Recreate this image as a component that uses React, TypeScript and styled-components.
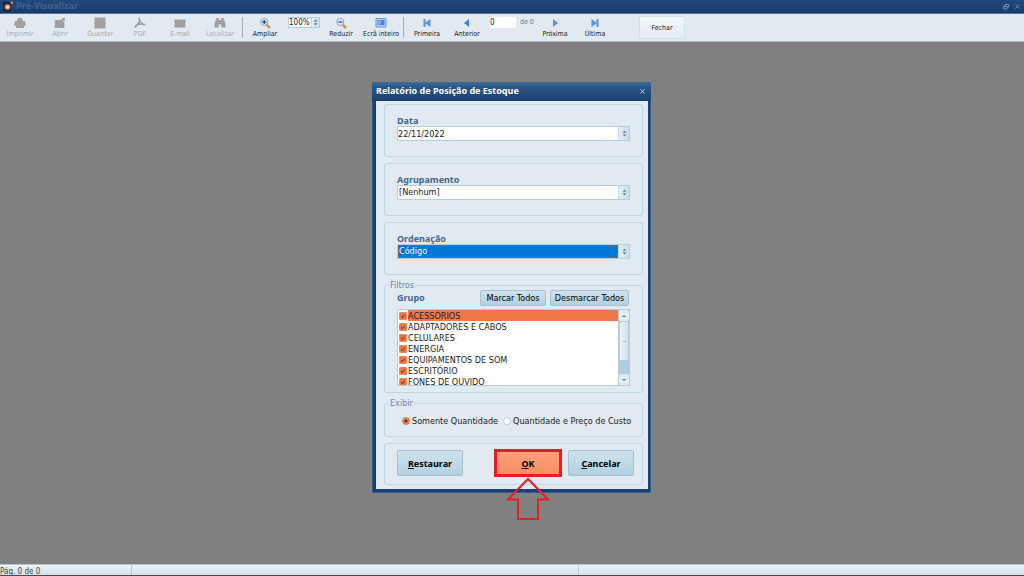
import React, { useState } from "react";
import styled, { createGlobalStyle, css } from "styled-components";

const GlobalStyle = createGlobalStyle`
  *, *::before, *::after { box-sizing: border-box; }
  body { margin: 0; background: #808080; }
  body, button, input, select { font-family: "DejaVu Sans Condensed", "DejaVu Sans", sans-serif; font-size: 9px; }
  button, input, select, fieldset, legend { margin: 0; padding: 0; border: 0; }
`;

const boldFont = css`
  font-family: "Noto Sans", "Open Sans", sans-serif;
  font-weight: bold;
`;

const Page = styled.div`
  min-height: 100vh;
  display: flex;
  flex-direction: column;
  background: #808080;
`;

const TitleBar = styled.header`
  height: 14px;
  display: flex;
  align-items: center;
  gap: 3px;
  padding: 0 3px;
  color: #3a648f;
  background: linear-gradient(#21497c, #193c6d);
  border-bottom: 1px solid #56708f;
`;

const AppTitle = styled.h1`
  flex: 1;
  margin: 0;
  font: bold 8px/12px "DejaVu Sans", sans-serif;
`;

const WindowButton = styled.button`
  width: 8px;
  height: 10px;
  display: grid;
  place-items: center;
  background: none;
  color: #7890ad;
`;

const ToolBar = styled.nav`
  height: 28px;
  display: flex;
  align-items: stretch;
  background: #e1e9f1;
  border-bottom: 1px solid #b4bac0;
`;

const Pager = styled.div`
  display: flex;
  padding-left: 1px;
`;

const Tool = styled.button`
  width: 40px;
  padding-top: 3px;
  display: flex;
  flex-direction: column;
  align-items: center;
  white-space: nowrap;
  font-size: 7px;
  line-height: 10px;
  background: none;
  color: #222;
  &:disabled { color: #a8adb2; }
  svg { display: block; flex: none; }
`;

const Separator = styled.span`
  width: 1px;
  margin: 3px 2px;
  background: #a4abb2;
`;

const ToolSlot = styled.div<{ $width: number }>`
  width: ${(p) => p.$width}px;
  padding: 3px 0 0 3px;
  display: flex;
  align-items: flex-start;
  gap: 4px;
  font-size: 7px;
  line-height: 11px;
  color: #5a7f9f;
  white-space: nowrap;
`;

const PageInput = styled.input`
  width: 26px;
  height: 11px;
  background: #fff;
  color: #222;
  font-size: 8px;
`;

const CloseReport = styled.button`
  width: 46px;
  height: 23px;
  margin: 2px 0 0 24px;
  font-size: 7px;
  color: #222;
  border: 1px solid #cfe0ea;
  border-radius: 2px;
  background: linear-gradient(#f3f7fa, #e3edf4);
`;

const Workspace = styled.main`
  flex: 1;
`;

const StatusBar = styled.footer`
  height: 12px;
  display: grid;
  grid-template-columns: 132px 447px 1fr;
  overflow: hidden;
  font-size: 8px;
  line-height: 13px;
  color: #444;
  background: linear-gradient(#edf3f7, #d3e1e9);
  border-top: 1px solid #b9c4ca;
  border-bottom: 1px solid #454a4d;
`;

const StatusCell = styled.span`
  border-right: 1px solid #b3c9d6;
  &:last-child { border-right: 0; }
`;

const Overlay = styled.div`
  position: absolute;
  inset: 0;
  display: flex;
  align-items: center;
  justify-content: center;
  padding: 0 1px 1px 0;
  pointer-events: none;
`;

const Dialog = styled.section`
  width: 279px;
  padding: 0 3px 4px 4px;
  pointer-events: auto;
  background: #1a3f70;
  border-radius: 3px 3px 0 0;
  box-shadow: inset 0 0 0 1px #315e8d;
`;

const DialogTitle = styled.header`
  height: 19px;
  margin: 0 -3px 0 -4px;
  padding: 0 5px 1px 4px;
  display: flex;
  align-items: center;
  justify-content: space-between;
  color: #fff;
  border-radius: 3px 3px 0 0;
  background: linear-gradient(#3d6d9d, #2a5587 30%, #1a3f70);
  h2 { margin: 0; ${boldFont} font-size: 9px; line-height: 12px; }
`;

const DialogBody = styled.form`
  display: grid;
  gap: 6px;
  padding: 3px 5px 4px 8px;
  background: #e1e9f1;
`;

const Group = styled.div`
  padding: 11px 12px 15px 12px;
  border: 1px solid #bfd5e4;
  border-radius: 3px;
`;

const Legended = styled.fieldset<{ $height: number }>`
  min-width: 0;
  height: ${(p) => p.$height}px;
  padding: 0 12px;
  border: 1px solid #bfd5e4;
  border-radius: 3px;
  legend {
    margin-left: -8px;
    padding: 0 1px;
    font-size: 9px;
    line-height: 9px;
    color: #6489ab;
  }
`;

const FieldLabel = styled.label`
  display: block;
  ${boldFont}
  font-size: 9px;
  line-height: 10px;
  color: #3f6990;
`;

const FieldBox = styled.div<{ $small?: boolean }>`
  display: flex;
  height: ${(p) => (p.$small ? 11 : 15)}px;
  width: ${(p) => (p.$small ? "32px" : "auto")};
  background: #fff;
  border: 1px solid #b4d0e0;
`;

const fieldText = css`
  flex: 1;
  min-width: 0;
  width: 100%;
  appearance: none;
  border-radius: 0;
  background: #fff;
  color: #222;
  outline: none;
`;

const TextInput = styled.input`
  ${fieldText}
`;

const Select = styled.select<{ $active?: boolean; $small?: boolean }>`
  ${fieldText}
  padding: 0 1px;
  line-height: 11px;
  ${(p) => p.$small && css`font-size: 8px; line-height: 9px; padding: 0;`}
  ${(p) => p.$active && css`
    padding: 0;
    color: #fff;
    background: #0078d7;
    border: 1px solid #6c6a60;
  `}
`;

const Stepper = styled.span<{ $small?: boolean }>`
  flex: none;
  width: ${(p) => (p.$small ? 8 : 11)}px;
  display: grid;
  place-items: center;
  background: linear-gradient(90deg, #e3edf4, #c9dce8);
  border-left: 1px solid #c4d9e6;
`;

const FilterHead = styled.div`
  display: flex;
  align-items: center;
  gap: 4px;
  padding-right: 1px;
  margin-bottom: 3px;
  strong { flex: 1; ${boldFont} font-size: 9px; line-height: 10px; color: #3f6990; }
`;

const buttonFace = css`
  color: #000;
  border: 1px solid #a3c2d4;
  border-radius: 2px;
  background: linear-gradient(#d0e2ed, #b2d0e0);
`;

const SmallButton = styled.button<{ $width: number }>`
  ${buttonFace}
  width: ${(p) => p.$width}px;
  height: 16px;
  white-space: nowrap;
`;

const ListBox = styled.div`
  height: 77px;
  display: flex;
  overflow: hidden;
  background: #fff;
  border: 1px solid #b4d0e0;
  border-right: 0;
`;

const Items = styled.ul`
  flex: 1;
  margin: 0;
  padding: 0;
  list-style: none;
`;

const Item = styled.li<{ $current: boolean }>`
  label {
    display: flex;
    align-items: center;
    gap: 1px;
    padding-left: 1px;
    height: 11px;
    line-height: 13px;
    white-space: nowrap;
    color: #222;
  }
  span {
    flex: 1;
    height: 11px;
    background: ${(p) => (p.$current ? "#f07846" : "transparent")};
  }
`;

const Check = styled.input`
  appearance: none;
  flex: none;
  margin: 0;
  width: 8px;
  height: 8px;
  border: 1px solid #e58a64;
  border-radius: 1px;
  display: grid;
  place-items: center;
  &:checked { background: #ee7446; }
  &:checked::after {
    content: "";
    width: 4px;
    height: 2px;
    border-left: 1px solid #8a3a1c;
    border-bottom: 1px solid #8a3a1c;
    transform: rotate(-45deg);
  }
`;

const ScrollBar = styled.div`
  width: 12px;
  display: flex;
  flex-direction: column;
  background: #b0cbdc;
  border: solid #b4d0e0;
  border-width: 0 1px;
`;

const ScrollButton = styled.button`
  flex: none;
  height: 11px;
  display: grid;
  place-items: center;
  background: #e1edf5;
  border-radius: 2px;
  &:last-child { margin-top: auto; }
`;

const Thumb = styled.div`
  flex: none;
  height: 40px;
  display: grid;
  place-items: center;
  background: linear-gradient(90deg, #edf3f8, #d0e1ec);
  border: 1px solid #b4d0e0;
  border-radius: 2px;
  &::after { content: ""; width: 3px; height: 1px; background: #a0bccf; }
`;

const RadioRow = styled.div`
  display: flex;
  align-items: center;
  gap: 5px;
  height: 26px;
  padding-left: 5px;
  label { display: flex; align-items: center; gap: 2px; color: #222; white-space: nowrap; }
`;

const Radio = styled.input`
  appearance: none;
  flex: none;
  width: 8px;
  height: 8px;
  border: 1px solid #b4d0e0;
  border-radius: 50%;
  background: #fff;
  &:checked {
    border-color: #e0744a;
    background: radial-gradient(circle, #6b2a12 0 1px, #f0804f 2px);
  }
`;

const Actions = styled.div`
  height: 42px;
  display: flex;
  align-items: center;
  padding: 0 8px 2px 12px;
  border: 1px solid #bfd5e4;
  border-radius: 3px;
`;

const ActionButton = styled.button`
  ${buttonFace}
  ${boldFont}
  width: 66px;
  height: 26px;
`;

const Confirm = styled.div`
  position: relative;
  margin: 0 6px 0 auto;
`;

const ConfirmButton = styled.button`
  ${boldFont}
  display: block;
  width: 68px;
  height: 28px;
  border: 3px solid #ed1c24;
  background: linear-gradient(#ffa07a, #f88e62);
`;

const Arrow = styled.svg`
  position: absolute;
  top: 100%;
  left: 50%;
  transform: translateX(-50%);
`;

const Steps = () => (
  <svg width="5" height="7" viewBox="0 0 5 7" fill="#5283a6" aria-hidden="true">
    <path d="M2.5 .5 4.3 2.7H.7zM2.5 6.5 4.3 4.3H.7z" />
  </svg>
);

const Icon = ({ children }: { children: React.ReactNode }) => (
  <svg width="12" height="12" viewBox="0 0 12 12" aria-hidden="true">{children}</svg>
);

const Magnifier = ({ plus }: { plus?: boolean }) => (
  <Icon>
    <path d="M8 8l2.300 2.300" stroke="#c79a35" strokeWidth="2.4" strokeLinecap="round" />
    <circle cx="5.300" cy="5" r="3.600" fill="#d9ebf9" stroke="#98a6b6" />
    <path d={plus ? "M3.300 5h4M5.300 3v4" : "M3.300 5h4"} stroke="#2c4f80" strokeWidth="1.3" />
  </Icon>
);

const disabledTools: [string, React.ReactNode][] = [
  ["Imprimir", <path d="M3.700 1h4l1.300 3.200h1.500c.7 0 1 .5 1 1.200V9h-1.500v2H2V9H.5V5.400c0-.7.3-1.200 1-1.200h1.200z" />],
  ["Abrir", <path d="M.8 3h5.500L8.500 1.800 7.800 1H11v3l-1-1-1.500 1.400h1.900V11H.8z" />],
  ["Guardar", <path d="M.5.500h11v11H.5z" />],
  ["PDF", <path fill="none" stroke="#a0a0a0" strokeWidth="1.600" d="M4.800 1c1.800 1.800 0 5.500-3.800 9.500 1.500-3.500 5-4.300 10-3C8 8 6 5 4.800 1" />],
  ["E-mail", <path d="M.5 2.500h11v8H.5z" />],
  ["Localizar", <path d="M2.500 1h2.300v2h2.400V1h2.300L11.500 7v3.500H7.200V7.200H4.800v3.300H.5V7z" />],
];

const groups = [
  "ACESSÓRIOS", "ADAPTADORES E CABOS", "CELULARES", "ENERGIA",
  "EQUIPAMENTOS DE SOM", "ESCRITÓRIO", "FONES DE OUVIDO",
];

export default function App() {
  const [checked, setChecked] = useState<string[]>(groups);
  const toggle = (name: string) =>
    setChecked((c) => (c.includes(name) ? c.filter((n) => n !== name) : [...c, name]));

  return (
    <>
      <GlobalStyle />
      <Page>
        <TitleBar>
          <svg width="10" height="11" viewBox="0 0 10 11" aria-hidden="true">
            <path d="M0 1h8v10H0z" fill="#14284a" />
            <circle cx="4.500" cy="6" r="2.800" fill="#f58a52" />
            <circle cx="4.500" cy="6" r="1.200" fill="#fff" />
            <circle cx="8.800" cy="1.800" r="1.200" fill="#f58a52" />
          </svg>
          <AppTitle>Pré-Visualizar</AppTitle>
          <WindowButton aria-label="Restaurar janela">
            <svg width="6" height="6" viewBox="0 0 6 6" fill="none" stroke="currentColor">
              <path d="M2 2V.5h3.500V3H4M.5 2.500h3.500v2.500H.5z" />
            </svg>
          </WindowButton>
          <WindowButton aria-label="Fechar janela">
            <svg width="5" height="5" viewBox="0 0 5 5" stroke="currentColor">
              <path d="M.5.500l4 4M4.500.500l-4 4" />
            </svg>
          </WindowButton>
        </TitleBar>

        <ToolBar>
          {disabledTools.map(([name, shape]) => (
            <Tool key={name} disabled>
              <svg width="12" height="12" viewBox="0 0 12 12" fill="#a0a0a0" aria-hidden="true">{shape}</svg>
              {name}
            </Tool>
          ))}
          <Separator />
          <Tool><Magnifier plus />Ampliar</Tool>
          <ToolSlot $width={36}>
            <FieldBox $small>
              <Select $small aria-label="Zoom"><option>100%</option></Select>
              <Stepper $small><Steps /></Stepper>
            </FieldBox>
          </ToolSlot>
          <Tool><Magnifier />Reduzir</Tool>
          <Tool>
            <Icon>
              <path d="M1 1.500h10v8.500H1z" fill="#b5cdf4" stroke="#6d95d8" />
              <path d="M2.500 3h7v5h-7z" fill="#4f80dc" />
              <path d="M3 3.500h4l-2 4H3z" fill="#86aef0" />
            </Icon>
            Ecrã inteiro
          </Tool>
          <Separator />
          <Pager>
            <Tool><Icon><path d="M2.500 2h2v3.500L9.500 2v8L4.500 6.500V10h-2z" fill="#5a93e0" /></Icon>Primeira</Tool>
            <Tool><Icon><path d="M8 2v8L3 6z" fill="#3f7fe0" /></Icon>Anterior</Tool>
            <ToolSlot $width={48}>
              <PageInput aria-label="Página" defaultValue="0" />
              de 0
            </ToolSlot>
            <Tool><Icon><path d="M4 2v8l5-4z" fill="#5a93e0" /></Icon>Próxima</Tool>
            <Tool><Icon><path d="M9.500 2h-2v3.500L2.500 2v8l5-3.500V10h2z" fill="#5a93e0" /></Icon>Última</Tool>
          </Pager>
          <CloseReport>Fechar</CloseReport>
        </ToolBar>

        <Workspace>
          <Overlay>
            <Dialog role="dialog" aria-labelledby="dialog-title">
              <DialogTitle>
                <h2 id="dialog-title">Relatório de Posição de Estoque</h2>
                <WindowButton aria-label="Fechar">
                  <svg width="5" height="5" viewBox="0 0 5 5" stroke="#c5d5e5">
                    <path d="M.5.500l4 4M4.500.500l-4 4" />
                  </svg>
                </WindowButton>
              </DialogTitle>
              <DialogBody onSubmit={(e) => e.preventDefault()}>
                <Group>
                  <FieldLabel htmlFor="date">Data</FieldLabel>
                  <FieldBox>
                    <TextInput id="date" defaultValue="22/11/2022" />
                    <Stepper><Steps /></Stepper>
                  </FieldBox>
                </Group>
                <Group>
                  <FieldLabel htmlFor="grouping">Agrupamento</FieldLabel>
                  <FieldBox>
                    <Select id="grouping"><option>[Nenhum]</option></Select>
                    <Stepper><Steps /></Stepper>
                  </FieldBox>
                </Group>
                <Group>
                  <FieldLabel htmlFor="order">Ordenação</FieldLabel>
                  <FieldBox>
                    <Select id="order" $active><option>Código</option></Select>
                    <Stepper><Steps /></Stepper>
                  </FieldBox>
                </Group>
                <Legended $height={112}>
                  <legend>Filtros</legend>
                  <FilterHead>
                    <strong>Grupo</strong>
                    <SmallButton type="button" $width={66} onClick={() => setChecked(groups)}>Marcar Todos</SmallButton>
                    <SmallButton type="button" $width={79} onClick={() => setChecked([])}>Desmarcar Todos</SmallButton>
                  </FilterHead>
                  <ListBox>
                    <Items>
                      {groups.map((name, i) => (
                        <Item key={name} $current={i === 0}>
                          <label>
                            <Check type="checkbox" checked={checked.includes(name)} onChange={() => toggle(name)} />
                            <span>{name}</span>
                          </label>
                        </Item>
                      ))}
                    </Items>
                    <ScrollBar>
                      <ScrollButton type="button" aria-label="Subir">
                        <svg width="4" height="2" viewBox="0 0 4 2"><path d="M0 2h4L2 0z" fill="#5283a6" /></svg>
                      </ScrollButton>
                      <Thumb />
                      <ScrollButton type="button" aria-label="Descer">
                        <svg width="4" height="2" viewBox="0 0 4 2"><path d="M0 0h4L2 2z" fill="#5283a6" /></svg>
                      </ScrollButton>
                    </ScrollBar>
                  </ListBox>
                </Legended>
                <Legended $height={38}>
                  <legend>Exibir</legend>
                  <RadioRow>
                    <label><Radio type="radio" name="show" defaultChecked />Somente Quantidade</label>
                    <label><Radio type="radio" name="show" />Quantidade e Preço de Custo</label>
                  </RadioRow>
                </Legended>
                <Actions>
                  <ActionButton type="button"><u>R</u>estaurar</ActionButton>
                  <Confirm>
                    <ConfirmButton><u>O</u>K</ConfirmButton>
                    <Arrow width="44" height="44" viewBox="0 0 44 44" fill="none" stroke="#ed1c24" strokeWidth="2" aria-hidden="true">
                      <path d="M22 2 2 22.500h10V42h20V22.500h10z" />
                    </Arrow>
                  </Confirm>
                  <ActionButton type="button"><u>C</u>ancelar</ActionButton>
                </Actions>
              </DialogBody>
            </Dialog>
          </Overlay>
        </Workspace>

        <StatusBar>
          <StatusCell>Pág. 0 de 0</StatusCell>
          <StatusCell />
          <StatusCell />
        </StatusBar>
      </Page>
    </>
  );
}
